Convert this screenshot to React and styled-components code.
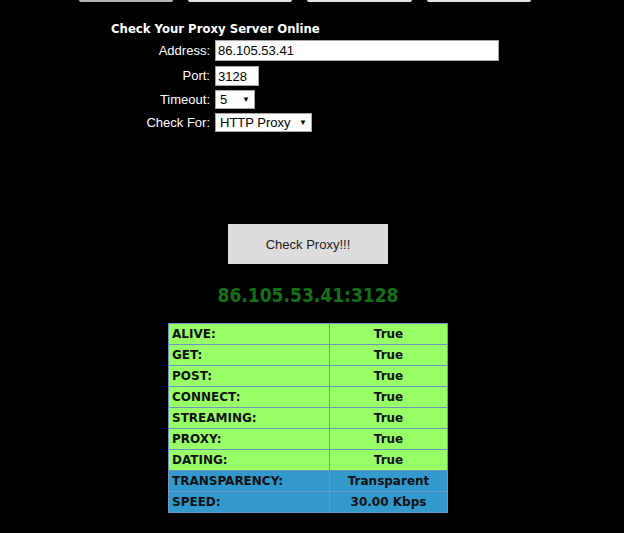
import React from 'react';
import styled, { createGlobalStyle } from 'styled-components';

const GlobalStyle = createGlobalStyle`
	html, body {
		margin: 0;
		padding: 0;
		background: #000;
	}
	body {
		font-family: 'Liberation Sans', Arial, sans-serif;
		font-size: 13px;
		color: #fff;
	}
`;

const tabs = [
	{ width: 94, shade: '#b4b4b4' },
	{ width: 104, shade: '#e4e4e4' },
	{ width: 105, shade: '#e4e4e4' },
	{ width: 104, shade: '#e4e4e4' },
];

const results = [
	{ label: 'ALIVE:', value: 'True' },
	{ label: 'GET:', value: 'True' },
	{ label: 'POST:', value: 'True' },
	{ label: 'CONNECT:', value: 'True' },
	{ label: 'STREAMING:', value: 'True' },
	{ label: 'PROXY:', value: 'True' },
	{ label: 'DATING:', value: 'True' },
	{ label: 'TRANSPARENCY:', value: 'Transparent', info: true },
	{ label: 'SPEED:', value: '30.00 Kbps', info: true },
];

const Page = styled.div`
	width: 616px;
	height: 533px;
	overflow: hidden;
`;

const TabBar = styled.nav`
	display: flex;
	gap: 15px;
	padding-left: 79px;
	height: 2px;
`;

const Tab = styled.div`
	width: ${props => props.$width}px;
	height: 2px;
	background: ${props => props.$shade};
	border-radius: 0 0 2px 2px;
`;

const Form = styled.form`
	display: grid;
	grid-template-columns: 99px auto;
	column-gap: 5px;
	row-gap: 4px;
	align-items: center;
	justify-content: start;
	padding: 19px 0 0 111px;
	margin: 0;
`;

const Title = styled.h2`
	grid-column: 1 / span 2;
	margin: 0 0 -1px;
	font-family: 'DejaVu Sans', Verdana, sans-serif;
	font-stretch: condensed;
	font-size: 13px;
	line-height: 16px;
	font-weight: bold;
	color: #fff;
	white-space: nowrap;
`;

const Label = styled.label`
	text-align: right;
	font-size: 13px;
	color: #fff;
	white-space: nowrap;
`;

const TextInput = styled.input`
	box-sizing: border-box;
	width: ${props => props.$width}px;
	height: ${props => props.$height}px;
	margin: ${props => props.$gap || 0}px 0 0;
	padding: 0 2px;
	border: 1px solid #a6a6a6;
	background: #fff;
	font-family: 'Liberation Sans', Arial, sans-serif;
	font-size: 13px;
	color: #000;
	outline: none;
`;

const SelectBox = styled.div`
	box-sizing: border-box;
	width: ${props => props.$width}px;
	height: 19px;
	display: flex;
	align-items: center;
	justify-content: space-between;
	padding: 0 4px 0 4px;
	border: 1px solid #a6a6a6;
	background: #fff;
	color: #000;
	font-size: 13px;
`;

const Arrow = styled.span`
	font-size: 8px;
	line-height: 1;
	color: #000;
`;

const Results = styled.section`
	display: flex;
	flex-direction: column;
	align-items: center;
	padding-top: 92px;
`;

const CheckButton = styled.button`
	width: 160px;
	height: 40px;
	border: none;
	background: #dddddd;
	color: #222;
	font-family: 'Liberation Sans', Arial, sans-serif;
	font-size: 13px;
	cursor: pointer;
`;

const Target = styled.div`
	margin-top: 21px;
	font-family: 'DejaVu Sans', Verdana, sans-serif;
	font-stretch: condensed;
	font-weight: bold;
	font-size: 19px;
	line-height: 21px;
	color: #16701a;
`;

const ResultTable = styled.table`
	margin-top: 17px;
	width: 280px;
	table-layout: fixed;
	border-collapse: collapse;
	border: 1px solid #6f94c8;
	font-family: 'DejaVu Sans', Verdana, sans-serif;
	font-size: 12px;
	font-weight: bold;
	color: #111;
`;

const Row = styled.tr`
	background: ${props => (props.$info ? '#3399cc' : '#99ff66')};
`;

const Cell = styled.td`
	height: 20px;
	padding: 0 3px;
	border: 1px solid #6f94c8;
	text-align: ${props => (props.$center ? 'center' : 'left')};
	width: ${props => (props.$center ? 'auto' : '154px')};
	white-space: nowrap;
`;

export default function App() {
	return (
		<Page>
			<GlobalStyle />
			<TabBar>
				{tabs.map((tab, i) => (
					<Tab key={i} $width={tab.width} $shade={tab.shade} />
				))}
			</TabBar>

			<Form onSubmit={e => e.preventDefault()}>
				<Title>Check Your Proxy Server Online</Title>
				<Label>Address:</Label>
				<TextInput $width={284} $height={21} defaultValue="86.105.53.41" />
				<Label>Port:</Label>
				<TextInput $width={44} $height={20} $gap={1} defaultValue="3128" />
				<Label>Timeout:</Label>
				<SelectBox $width={40}>
					<span>5</span>
					<Arrow>▼</Arrow>
				</SelectBox>
				<Label>Check For:</Label>
				<SelectBox $width={97}>
					<span>HTTP Proxy</span>
					<Arrow>▼</Arrow>
				</SelectBox>
			</Form>

			<Results>
				<CheckButton type="button">Check Proxy!!!</CheckButton>
				<Target>86.105.53.41:3128</Target>
				<ResultTable>
					<tbody>
						{results.map(r => (
							<Row key={r.label} $info={r.info}>
								<Cell>{r.label}</Cell>
								<Cell $center>{r.value}</Cell>
							</Row>
						))}
					</tbody>
				</ResultTable>
			</Results>
		</Page>
	);
}
